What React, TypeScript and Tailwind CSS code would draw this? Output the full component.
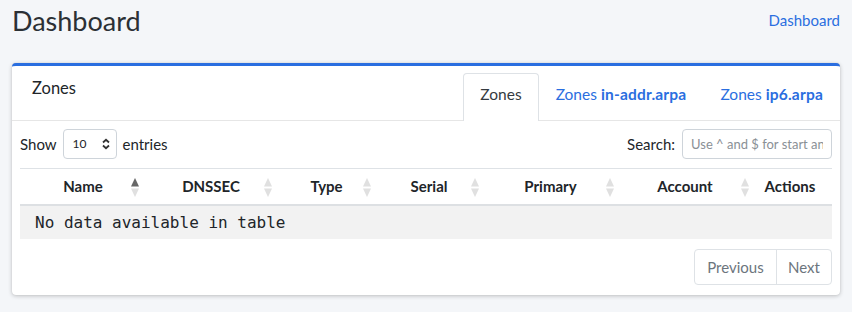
import React from 'react';

const columns = [
  { label: 'Name', w: 'w-[129px]', pad: 'pl-[23px] pr-[26px]', sort: 'asc' },
  { label: 'DNSSEC', w: 'w-[133px]', pad: 'pl-[17px] pr-[26px]', sort: 'none' },
  { label: 'Type', w: 'w-[99px]', pad: 'pl-[16px] pr-[26px]', sort: 'none' },
  { label: 'Serial', w: 'w-[108px]', pad: 'pl-[14px] pr-[26px]', sort: 'none' },
  { label: 'Primary', w: 'w-[135px]', pad: 'pl-[14px] pr-[26px]', sort: 'none' },
  { label: 'Account', w: 'w-[135px]', pad: 'pl-[13px] pr-[26px]', sort: 'none' },
  { label: 'Actions', w: 'w-[73px]', pad: 'pl-[15px] pr-[26px]', sort: null },
];

const SortIcon = ({ dir }: { dir: string }) => (
  <svg width="8" height="19" viewBox="0 0 8 19" className="absolute right-[10px] top-[9px]">
    <path d="M4 0L8 8.5H0Z" fill={dir === 'asc' ? '#666' : '#e0e0e0'} />
    <path d="M0 10.5H8L4 19Z" fill="#e0e0e0" />
  </svg>
);

const SelectArrows = () => (
  <svg width="10" height="12" viewBox="0 0 10 12" className="ml-[15px]">
    <path d="M2 4.5L5 1.8L8 4.5" stroke="#333" strokeWidth="1.8" fill="none" />
    <path d="M2 7.5L5 10.2L8 7.5" stroke="#333" strokeWidth="1.8" fill="none" />
  </svg>
);

export default function App() {
  return (
    <div className="min-h-[312px] bg-[#f4f6f9] px-[12px] pt-[4px] font-['Lato','Open_Sans',sans-serif] text-[#212529]">
      <div className="flex h-[40px] items-start justify-between">
        <h1 className="text-[27px] leading-[34px] text-[#2b3035]">Dashboard</h1>
        <a className="mt-[4px] text-[15px] leading-[24px] text-[#2a6ee0]">Dashboard</a>
      </div>

      <div className="mt-[19px] rounded-[4px] border-t-[3px] border-[#2a6ee0] bg-white shadow-[0_0_1px_rgba(0,0,0,0.13),0_1px_4px_rgba(0,0,0,0.22)]">
        <div className="flex h-[55px] items-start justify-between border-b border-[#e6e6e6]">
          <h3 className="pl-[20px] pt-[12px] text-[16.5px] leading-[21px]">Zones</h3>
          <div className="-mb-px flex self-end text-[15.5px]">
            <div className="flex h-[48px] items-center rounded-t-[4px] border border-b-0 border-[#dee2e6] bg-white px-[16px] pb-[5px] text-[#343a40]">
              Zones
            </div>
            <div className="flex h-[48px] items-center px-[17px] pb-[5px] text-[#2a6ee0]">
              Zones&nbsp;<span className="font-bold tracking-[0.2px]">in-addr.arpa</span>
            </div>
            <div className="flex h-[48px] items-center px-[17px] pb-[5px] text-[#2a6ee0]">
              Zones&nbsp;<span className="font-bold tracking-[0.2px]">ip6.arpa</span>
            </div>
          </div>
        </div>

        <div className="px-[8px] pt-[8px] pb-[10px]">
          <div className="flex h-[30px] items-center justify-between text-[15px]">
            <div className="flex items-center">
              <span>Show</span>
              <div className="mx-[6px] flex h-[30px] w-[54px] items-center rounded-[4px] border border-[#ced4da] pl-[9px] text-[12px]">
                10
                <SelectArrows />
              </div>
              <span>entries</span>
            </div>
            <div className="flex items-center">
              <span className="mr-[7px]">Search:</span>
              <input
                placeholder="Use ^ and $ for start and end"
                className="h-[30px] w-[150px] rounded-[4px] border border-[#ced4da] px-[8px] text-[13px] outline-none placeholder:text-[#8a9096]"
              />
            </div>
          </div>

          <div className="mt-[9px]">
            <div className="flex h-[38px] border-t border-b-2 border-[#dee2e6] border-b-[#dde0e3] text-[15px] font-bold">
              {columns.map((c) => (
                <div key={c.label} className={`relative flex items-center justify-center ${c.w} ${c.pad}`}>
                  {c.label}
                  {c.sort && <SortIcon dir={c.sort} />}
                </div>
              ))}
            </div>
            <div className="flex h-[33px] items-center bg-[#f2f2f2] pl-[15px] font-['DejaVu_Sans_Mono',monospace] text-[16px]">
              No data available in table
            </div>
          </div>

          <div className="mt-[10px] flex justify-end">
            <div className="flex h-[36px] rounded-[4px] border border-[#dee2e6] text-[15px] text-[#6c757d]">
              <div className="flex w-[82px] items-center justify-center border-r border-[#dee2e6]">Previous</div>
              <div className="flex w-[54px] items-center justify-center">Next</div>
            </div>
          </div>
        </div>
      </div>
    </div>
  );
}
